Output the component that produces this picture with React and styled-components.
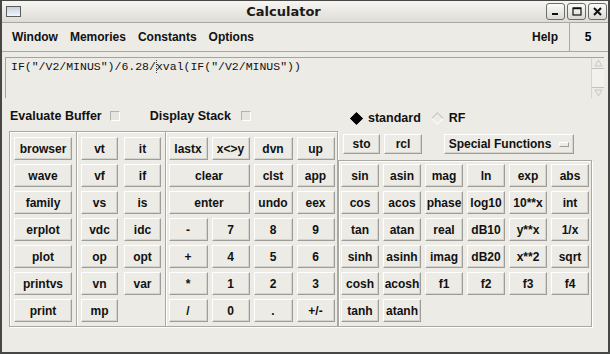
import React from 'react'
import styled, { createGlobalStyle } from 'styled-components'

const GlobalStyle = createGlobalStyle`
  html, body { margin: 0; padding: 0; background: #ecebe6; }
  body { font-family: "Liberation Sans", Arial, sans-serif; }
`

const Window = styled.div`
  width: 610px;
  height: 354px;
  box-sizing: border-box;
  border: 2px solid #474745;
  border-top-width: 1px;
  background: #ecebe6;
  display: flex;
  flex-direction: column;
  overflow: hidden;
`

const TitleBar = styled.div`
  height: 21px;
  border-bottom: 1px solid #a8a7a2;
  background: linear-gradient(#f6f5f1, #dedcd6);
  display: flex;
  align-items: center;
  padding: 0 1px 0 4px;
`

const WinIcon = styled.div`
  width: 13px;
  height: 9px;
  border: 1px solid #5c5c5a;
  background: linear-gradient(#c3cfe2, #f4f6fa);
`

const Title = styled.div`
  flex: 1;
  text-align: center;
  font-family: "DejaVu Sans", sans-serif;
  font-weight: bold;
  font-size: 13px;
  color: #1a1a1a;
`

const WinButtons = styled.div`
  display: flex;
  gap: 2px;
`

const WinButton = styled.div`
  width: 17px;
  height: 15px;
  border: 1px solid #6d6d6b;
  border-radius: 3px;
  background: linear-gradient(#fbfbf9, #dad9d4);
  display: flex;
  align-items: center;
  justify-content: center;
`

const MenuRow = styled.div`
  height: 28px;
  display: flex;
  border-bottom: 1px solid #a8a7a2;
`

const MenuBar = styled.div`
  flex: 1;
  display: flex;
  align-items: center;
  padding-left: 4px;
  border-right: 1px solid #a8a7a2;
`

const MenuItem = styled.div`
  padding: 0 6px;
  font-weight: bold;
  font-size: 12px;
  color: #111;
  margin-left: ${p => (p.$right ? 'auto' : '0')};
  margin-right: ${p => (p.$right ? '5px' : '0')};
`

const Counter = styled.div`
  width: 36px;
  display: flex;
  align-items: center;
  justify-content: center;
  font-weight: bold;
  font-size: 12px;
  padding-right: 2px;
`

const Editor = styled.div`
  margin: 5px 4px 0 3px;
  height: 41px;
  display: flex;
  border-top: 1px solid #a4a39e;
  border-left: 1px solid #a4a39e;
  box-sizing: border-box;
`

const EditText = styled.div`
  flex: 1;
  padding: 1px 5px;
  font-family: "Liberation Mono", "DejaVu Sans Mono", monospace;
  font-size: 11.5px;
  line-height: 16px;
  color: #111;
  white-space: pre;
`

const Caret = styled.span`
  display: inline-block;
  width: 0;
  height: 13px;
  border-left: 1px dotted #444;
  vertical-align: -3px;
  margin: 0 -1px 0 0;
`

const Scrollbar = styled.div`
  width: 12px;
  display: flex;
  flex-direction: column;
  border-left: 1px solid #d6d5d0;
`

const ScrollArrow = styled.div`
  height: 10px;
  display: flex;
  align-items: center;
  justify-content: center;
`

const ScrollThumb = styled.div`
  height: 18px;
  border-top: 1px solid #c2c1bc;
  border-bottom: 1px solid #c2c1bc;
  background: #f2f1ed;
`

const Body = styled.div`
  display: flex;
  align-items: flex-start;
  margin-left: 7px;
`

const LeftColumn = styled.div`
  width: 329px;
  display: flex;
  flex-direction: column;
`

const RightColumn = styled.div`
  width: 254px;
  display: flex;
  flex-direction: column;
`

const CheckRow = styled.div`
  height: 33px;
  display: flex;
  align-items: center;
  padding: 2px 0 0 1px;
  box-sizing: border-box;
`

const Label = styled.span`
  font-weight: bold;
  font-size: 12.5px;
  color: #111;
  margin-left: ${p => p.$gap || 0}px;
`

const CheckBox = styled.span`
  width: 8px;
  height: 8px;
  margin-left: ${p => p.$gap}px;
  border: 1px solid #fff;
  border-top-color: #b3b2ad;
  border-left-color: #b3b2ad;
  background: #e6e5e0;
`

const Frame = styled.div`
  display: flex;
  height: ${p => p.$h}px;
  box-sizing: border-box;
  border: 1px solid #a9a8a3;
  box-shadow: inset 1px 1px 0 #fff, 1px 1px 0 #fff;
`

const Panel = styled.div`
  width: ${p => (p.$w ? `${p.$w}px` : 'auto')};
  flex: ${p => (p.$w ? 'none' : '1')};
  display: grid;
  grid-template-columns: ${p => p.$cols};
  grid-template-rows: repeat(${p => p.$rows}, 23px);
  column-gap: ${p => p.$gap}px;
  row-gap: 4px;
  justify-content: center;
  align-content: start;
  padding-top: ${p => p.$top}px;
  border-left: ${p => (p.$divided ? '1px solid #a9a8a3' : 'none')};
  box-shadow: ${p => (p.$divided ? 'inset 1px 0 0 #fff' : 'none')};
`

const Key = styled.div`
  grid-column: span ${p => p.$span || 1};
  width: ${p => (p.$w ? `${p.$w}px` : 'auto')};
  height: ${p => p.$h || 23}px;
  margin-left: ${p => p.$ml || 0}px;
  box-sizing: border-box;
  display: flex;
  align-items: center;
  justify-content: center;
  gap: 8px;
  border: 1px solid #9e9d98;
  border-top-color: #fff;
  border-left-color: #fff;
  box-shadow: inset -1px -1px 0 #d4d3ce;
  background: #ecebe6;
  font-weight: bold;
  font-size: 12px;
  color: #111;
  white-space: nowrap;
`

const RadioRow = styled.div`
  height: 36px;
  display: flex;
  align-items: center;
  padding: 4px 0 0 14px;
  box-sizing: border-box;
`

const Diamond = styled.span`
  width: 7px;
  height: 7px;
  transform: rotate(45deg);
  background: ${p => (p.$on ? '#000' : 'transparent')};
  border: 1px solid ${p => (p.$on ? '#000' : '#fff')};
  border-top-color: ${p => (p.$on ? '#000' : '#c3c2bd')};
  border-left-color: ${p => (p.$on ? '#000' : '#c3c2bd')};
  margin-left: ${p => p.$gap || 0}px;
  margin-right: 7px;
`

const ToolRow = styled.div`
  height: 20px;
  display: flex;
  padding-left: 5px;
  margin-bottom: 6px;
`

const MenuMark = styled.span`
  width: 8px;
  height: 3px;
  border: 1px solid #9e9d98;
  border-top-color: #fff;
  border-left-color: #fff;
`

const leftKeys = ['browser', 'wave', 'family', 'erplot', 'plot', 'printvs', 'print']
const waveKeys = ['vt', 'it', 'vf', 'if', 'vs', 'is', 'vdc', 'idc', 'op', 'opt', 'vn', 'var', 'mp']
const calcKeys = [
  ['lastx'], ['x<>y'], ['dvn'], ['up'],
  ['clear', 2], ['clst'], ['app'],
  ['enter', 2], ['undo'], ['eex'],
  ['-'], ['7'], ['8'], ['9'],
  ['+'], ['4'], ['5'], ['6'],
  ['*'], ['1'], ['2'], ['3'],
  ['/'], ['0'], ['.'], ['+/-'],
]
const funcKeys = [
  'sin', 'asin', 'mag', 'ln', 'exp', 'abs',
  'cos', 'acos', 'phase', 'log10', '10**x', 'int',
  'tan', 'atan', 'real', 'dB10', 'y**x', '1/x',
  'sinh', 'asinh', 'imag', 'dB20', 'x**2', 'sqrt',
  'cosh', 'acosh', 'f1', 'f2', 'f3', 'f4',
  'tanh', 'atanh',
]

export default function App() {
  return (
    <>
      <GlobalStyle />
      <Window>
        <TitleBar>
          <WinIcon />
          <Title>Calculator</Title>
          <WinButtons>
            <WinButton>
              <svg width="9" height="9" viewBox="0 0 9 9"><rect x="1" y="6" width="6" height="2" fill="#111" /></svg>
            </WinButton>
            <WinButton>
              <svg width="10" height="9" viewBox="0 0 10 9"><rect x="1" y="1" width="8" height="7" fill="none" stroke="#111" strokeWidth="1.2" /><rect x="1" y="0.6" width="8" height="1.6" fill="#111" /></svg>
            </WinButton>
            <WinButton>
              <svg width="9" height="9" viewBox="0 0 9 9"><path d="M1 1 L8 8 M8 1 L1 8" stroke="#111" strokeWidth="2" /></svg>
            </WinButton>
          </WinButtons>
        </TitleBar>

        <MenuRow>
          <MenuBar>
            <MenuItem>Window</MenuItem>
            <MenuItem>Memories</MenuItem>
            <MenuItem>Constants</MenuItem>
            <MenuItem>Options</MenuItem>
            <MenuItem $right>Help</MenuItem>
          </MenuBar>
          <Counter>5</Counter>
        </MenuRow>

        <Editor>
          <EditText>IF("/V2/MINUS")/6.28/<Caret />xval(IF("/V2/MINUS"))</EditText>
          <Scrollbar>
            <ScrollArrow>
              <svg width="9" height="8" viewBox="0 0 9 8"><path d="M4.5 1 L8 7 L1 7 Z" fill="none" stroke="#c9c8c3" /></svg>
            </ScrollArrow>
            <ScrollThumb />
            <ScrollArrow>
              <svg width="9" height="8" viewBox="0 0 9 8"><path d="M1 1 L8 1 L4.5 7 Z" fill="none" stroke="#c9c8c3" /></svg>
            </ScrollArrow>
          </Scrollbar>
        </Editor>

        <Body>
          <LeftColumn>
            <CheckRow>
              <Label>Evaluate Buffer</Label>
              <CheckBox $gap={8} />
              <Label $gap={30}>Display Stack</Label>
              <CheckBox $gap={10} />
            </CheckRow>
            <Frame $h={196}>
              <Panel $w={66} $cols="58px" $rows={7} $gap={0} $top={5}>
                {leftKeys.map(k => <Key key={k}>{k}</Key>)}
              </Panel>
              <Panel $w={88} $cols="37px 37px" $rows={7} $gap={6} $top={5} $divided>
                {waveKeys.map(k => <Key key={k}>{k}</Key>)}
              </Panel>
              <Panel $cols="39px 38px 39px 38px" $rows={7} $gap={4} $top={5} $divided>
                {calcKeys.map(([k, span]) => <Key key={k} $span={span}>{k}</Key>)}
              </Panel>
            </Frame>
          </LeftColumn>

          <RightColumn>
            <RadioRow>
              <Diamond $on />
              <Label>standard</Label>
              <Diamond $gap={12} />
              <Label>RF</Label>
            </RadioRow>
            <ToolRow>
              <Key $w={37} $h={20}>sto</Key>
              <Key $w={38} $h={20} $ml={4}>rcl</Key>
              <Key $w={130} $h={20} $ml={22}>Special Functions <MenuMark /></Key>
            </ToolRow>
            <Frame $h={167}>
              <Panel $cols="repeat(6, 38px)" $rows={6} $gap={4} $top={3}>
                {funcKeys.map(k => <Key key={k}>{k}</Key>)}
              </Panel>
            </Frame>
          </RightColumn>
        </Body>
      </Window>
    </>
  )
}
